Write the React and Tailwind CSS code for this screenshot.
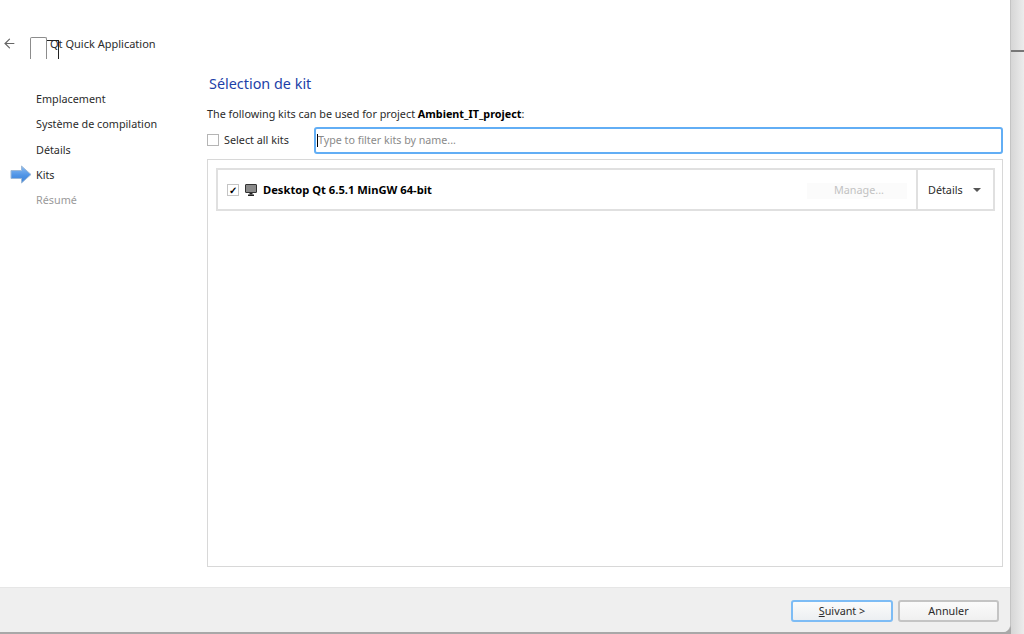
import React from 'react';
import { ArrowLeft } from 'lucide-react';

const steps = [
  { label: 'Emplacement' },
  { label: 'Système de compilation' },
  { label: 'Détails' },
  { label: 'Kits', active: true },
  { label: 'Résumé', muted: true },
];

function StepArrow() {
  return (
    <svg width="22" height="19" viewBox="0 0 22 19" className="absolute left-[-26px] top-[-2px]">
      <defs>
        <linearGradient id="arrowFill" x1="0" y1="0" x2="0" y2="1">
          <stop offset="0" stopColor="#8dbdf2" />
          <stop offset="0.55" stopColor="#4f94e6" />
          <stop offset="1" stopColor="#3f83d6" />
        </linearGradient>
      </defs>
      <path d="M1 5.5h10.5V1l9.5 8.5-9.5 8.5v-4.5H1z" fill="url(#arrowFill)" stroke="#9db9d8" strokeWidth="1" />
    </svg>
  );
}

function Monitor() {
  return (
    <svg width="12" height="12" viewBox="0 0 12 12">
      <rect x="0.5" y="0.5" width="11" height="8" rx="0.5" fill="#8a8a8a" stroke="#333" />
      <rect x="4.5" y="9" width="3" height="1.5" fill="#222" />
      <rect x="3" y="10.5" width="6" height="1.5" fill="#222" />
    </svg>
  );
}

export default function App() {
  return (
    <div className="w-[1024px] h-[634px] flex overflow-hidden bg-[#a8a8a8] text-[10.8px] text-[#2b2b2b] font-['Noto_Sans','Open_Sans',sans-serif]">
      <div className="w-[1011px] h-[632px] flex flex-col bg-white border-r border-[#c4c4c4] rounded-br-lg overflow-hidden">
        <div className="h-[66px] shrink-0 pl-[2px] pt-[36px] flex items-start">
          <ArrowLeft size={15} strokeWidth={1.9} className="text-[#666]" />
          <div className="relative ml-[33px] text-[11px] leading-[15px]">
            <span>Qt Quick Application</span>
            <div className="absolute left-[-20px] top-[1px] w-[17px] h-[22px] border border-b-0 border-[#8c8c8c] rounded-t-[2px]" />
            <div className="absolute left-[-3px] top-[4px] w-[12px] h-[19px] border-t border-r border-[#222]" />
          </div>
        </div>

        <div className="flex-1 flex min-h-0">
          <div className="w-[207px] shrink-0 pl-[36px] pt-[25px] flex flex-col gap-[10px]">
            {steps.map((s) => (
              <div
                key={s.label}
                className={`relative leading-[15.3px] ${s.muted ? 'text-[#9a9a9a]' : ''}`}
              >
                {s.active && <StepArrow />}
                {s.label}
              </div>
            ))}
          </div>

          <div className="flex-1 pr-[7px] pb-[20px] flex flex-col min-w-0">
            <h2 className="text-[14.4px] leading-[20px] pl-[2px] mt-[8px] text-[#1d3fa8] font-normal">Sélection de kit</h2>
            <p className="mt-[12px] leading-[15px]">
              The following kits can be used for project <b className="font-bold text-black">Ambient_IT_project</b>:
            </p>
            <div className="mt-[5px] flex items-center h-[28px]">
              <span className="w-[12px] h-[12px] border border-[#b5b5b5] bg-white" />
              <span className="ml-[5px] w-[90px]">Select all kits</span>
              <div className="flex-1 h-[27px] border-2 border-[#62aef5] rounded-[3px] flex items-center pl-[1px] text-[#8a8a8a]">
                <span className="w-px h-[13px] bg-black" />
                <span className="text-[10.7px]">Type to filter kits by name...</span>
              </div>
            </div>
            <div className="mt-[5px] flex-1 border border-[#d8d8d8] pl-[8px] pr-[7px] pt-[8px]">
              <div className="h-[43px] flex items-center border-2 border-[#e0e0e0]">
                <span className="ml-[9px] w-[12px] h-[12px] flex items-center justify-center border border-[#c4c4c4] text-[10px] leading-none font-bold text-black">✓</span>
                <span className="ml-[6px] flex"><Monitor /></span>
                <span className="ml-[6px] pt-[2px] text-[11.2px] font-bold text-black">Desktop Qt 6.5.1 MinGW 64-bit</span>
                <div className="ml-auto w-[100px] h-[16px] mt-[2px] bg-[#fbfbfb] flex items-center justify-center pl-[4px] text-[#c2c2c2]">Manage...</div>
                <div className="ml-[9px] w-[77px] h-full border-l-2 border-[#e0e0e0] flex items-center pl-[10px]">
                  <span className="pt-[2px]">Détails</span>
                  <span className="ml-[10px] w-0 h-0 border-x-[4px] border-x-transparent border-t-[4px] border-t-[#555]" />
                </div>
              </div>
            </div>
          </div>
        </div>

        <div className="h-[45px] shrink-0 bg-[#efefef] border-t border-[#e6e6e6] flex items-start justify-end pt-[12px] pr-[11px] gap-[5px]">
          <button className="w-[102px] h-[22px] rounded-[3px] border-2 border-[#7dbcf5] bg-gradient-to-b from-[#fbfbfb] to-[#eceff2] flex items-center justify-center">
            <span><span className="underline">S</span>uivant &gt;</span>
          </button>
          <button className="w-[101px] h-[22px] rounded-[3px] border-2 border-[#c4c4c4] bg-gradient-to-b from-[#fbfbfb] to-[#f0f0f0] flex items-center justify-center">
            Annuler
          </button>
        </div>
      </div>
      <div className="flex-1 h-full bg-gradient-to-r from-[#d6d6d6] to-[#ececec] flex flex-col">
        <div className="mt-[50px] h-[2px] bg-[#777]" />
      </div>
    </div>
  );
}
